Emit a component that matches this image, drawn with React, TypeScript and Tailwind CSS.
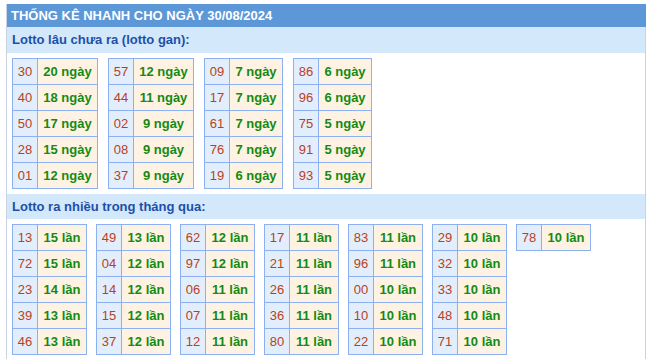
import React from "react";

const gan: [string, string][][] = [
  [["30", "20 ngày"], ["40", "18 ngày"], ["50", "17 ngày"], ["28", "15 ngày"], ["01", "12 ngày"]],
  [["57", "12 ngày"], ["44", "11 ngày"], ["02", "9 ngày"], ["08", "9 ngày"], ["37", "9 ngày"]],
  [["09", "7 ngày"], ["17", "7 ngày"], ["61", "7 ngày"], ["76", "7 ngày"], ["19", "6 ngày"]],
  [["86", "6 ngày"], ["96", "6 ngày"], ["75", "5 ngày"], ["91", "5 ngày"], ["93", "5 ngày"]],
];
const ganW = ["w-[59px]", "w-[59px]", "w-[52px]", "w-[52px]"];

const nhieu: [string, string][][] = [
  [["13", "15 lần"], ["72", "15 lần"], ["23", "14 lần"], ["39", "13 lần"], ["46", "13 lần"]],
  [["49", "13 lần"], ["04", "12 lần"], ["14", "12 lần"], ["15", "12 lần"], ["37", "12 lần"]],
  [["62", "12 lần"], ["97", "12 lần"], ["06", "11 lần"], ["07", "11 lần"], ["12", "11 lần"]],
  [["17", "11 lần"], ["21", "11 lần"], ["26", "11 lần"], ["36", "11 lần"], ["80", "11 lần"]],
  [["83", "11 lần"], ["96", "11 lần"], ["00", "10 lần"], ["10", "10 lần"], ["22", "10 lần"]],
  [["29", "10 lần"], ["32", "10 lần"], ["33", "10 lần"], ["48", "10 lần"], ["71", "10 lần"]],
  [["78", "10 lần"]],
];

function Tbl({ rows, vw }: { rows: [string, string][]; vw: string }) {
  return (
    <div className="flex flex-col self-start border-t border-l border-[#8db0f2]">
      {rows.map(([n, v], i) => (
        <div key={i} className="flex h-[26px]">
          <div className="w-[25px] flex items-center justify-center border-r border-b border-[#8db0f2] bg-[#e3eefd] text-[13px] text-[#b8411c]">
            {n}
          </div>
          <div
            className={`${vw} box-content flex items-center justify-center border-r border-b border-[#8db0f2] bg-[#fef3e2] whitespace-nowrap text-[13px] font-bold text-[#148a14]`}
          >
            {v}
          </div>
        </div>
      ))}
    </div>
  );
}

export default function App() {
  return (
    <div className="px-[6px] pt-[4px] bg-white" style={{ fontFamily: '"Liberation Sans", Arial, sans-serif' }}>
      <div className="border-l border-r border-[#c9d3e0] w-[640px] h-[355px]">
        <div className="-mr-px h-[23px] bg-[#5c97d7] text-white font-bold text-[13px] leading-[23px] pl-[4px]">
          THỐNG KÊ NHANH CHO NGÀY 30/08/2024
        </div>
        <div className="h-[26px] bg-[#d4e8fc] text-[#1c50a8] font-bold text-[13px] leading-[26px] pl-[5px]">
          Lotto lâu chưa ra (lotto gan):
        </div>
        <div className="flex gap-[10px] pl-[5px] pt-[5px]">
          {gan.map((t, i) => (
            <Tbl key={i} rows={t} vw={ganW[i]} />
          ))}
        </div>
        <div className="mt-[5px] h-[25px] bg-[#d4e8fc] text-[#1c50a8] font-bold text-[13px] leading-[25px] pl-[5px]">
          Lotto ra nhiều trong tháng qua:
        </div>
        <div className="flex gap-[9px] pl-[5px] pt-[5px]">
          {nhieu.map((t, i) => (
            <Tbl key={i} rows={t} vw="w-[48px]" />
          ))}
        </div>
      </div>
    </div>
  );
}
